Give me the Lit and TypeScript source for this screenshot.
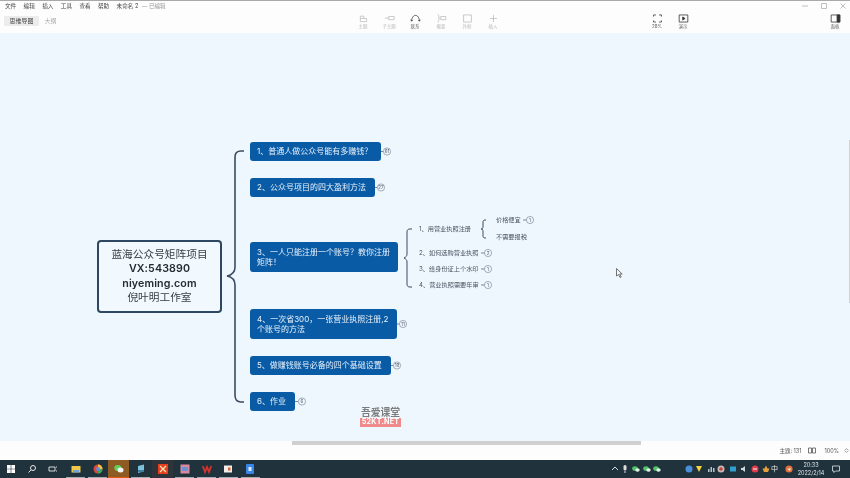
import { LitElement, html, css, svg } from "lit";
import { customElement } from "lit/decorators.js";

const menus = ["文件", "编辑", "插入", "工具", "查看", "帮助"];

const tools: [string, any, boolean][] = [
  ["主题", svg`<path d="M3 3.500h4.500v3H3zM3 6.500v4h8v-4H7.500"/>`, false],
  ["子主题", svg`<path d="M1 6h5M6 4h7v4H6z"/>`, false],
  ["联系", svg`<path d="M2 9.500C2.500 4.500 5 2.500 7 2.500s4.500 2 5 7M1 8l1 2 1.500-1.500M10.500 8.500 12 10l1-2"/>`, true],
  ["概要", svg`<path d="M2 1.500c1.500 0 1.500 1 1.500 2v1.500c0 1 .5 1 1 1-.5 0-1 0-1 1v2c0 1 0 2-1.500 2M6 4h6.500v4H6z"/>`, false],
  ["外框", svg`<path d="M2 2h10v9H2z"/>`, false],
  ["插入", svg`<path d="M7 2v9M2.500 6.500h9"/>`, false],
];

const nodes = [
  { t: "1、普通人做公众号能有多赚钱\uFF1F", x: 250, y: 142, w: 131, h: 19, n: "61", bx: 387 },
  { t: "2、公众号项目的四大盈利方法", x: 250, y: 178, w: 125, h: 19, n: "27", bx: 381 },
  { t: "3、一人只能注册一个账号\uFF1F教你注册矩阵\uFF01", x: 250, y: 242, w: 148, h: 30, n: "", bx: 0 },
  { t: "4、一次省300\uFF0C一张营业执照注册,2个账号的方法", x: 250, y: 309, w: 147, h: 30, n: "11", bx: 403 },
  { t: "5、做赚钱账号必备的四个基础设置", x: 250, y: 356, w: 141, h: 19, n: "19", bx: 397 },
  { t: "6、作业", x: 250, y: 392, w: 45, h: 19, n: "6", bx: 302 },
];

const subs = [
  { t: "1、用营业执照注册", x: 419, y: 229, n: "", bx: 0 },
  { t: "价格便宜", x: 496, y: 220, n: "1", bx: 530 },
  { t: "不需要报税", x: 496, y: 237, n: "", bx: 0 },
  { t: "2、如何选购营业执照", x: 419, y: 253, n: "2", bx: 488 },
  { t: "3、给身份证上个水印", x: 419, y: 269, n: "1", bx: 488 },
  { t: "4、营业执照需要年审", x: 419, y: 285, n: "1", bx: 488 },
];

const runningBars = [66, 88, 131, 153, 175, 197, 219, 241];

const badge = (cx: number, cy: number, n: string) => svg`
  <path d="M${cx - 7} ${cy}h3.500" class="thin"/>
  <circle cx=${cx} cy=${cy} r="3.600" class="bd"/>
  <text x=${cx} y=${cy + 1.700} class="bt">${n}</text>`;

const chat = svg`<ellipse cx="3" cy="3.500" rx="2.800" ry="2.300" fill="#4fc36a"/><ellipse cx="5.500" cy="5" rx="2.200" ry="1.800" fill="#e8f6ea"/>`;

@customElement("app-root")
export class AppRoot extends LitElement {
  static styles = css`
    :host { display: flex; flex-direction: column; width: 850px; height: 478px; overflow: hidden; font-family: "Inter", "Noto Sans CJK SC", sans-serif; background: #fff; }
    .blur { filter: blur(0.5px); display: flex; flex-direction: column; flex: 1; min-height: 0; }
    .topline { height: 1px; background: #a9a9a9; flex: none; }
    .title { height: 10px; flex: none; display: flex; align-items: center; padding-left: 5px; gap: 7.400px; font-size: 5.600px; color: #444; background: #fdfdfd; }
    .title .dim { color: #999; margin-left: -4px; }
    .win { margin-left: auto; display: flex; gap: 13px; padding-right: 4px; align-items: center; }
    .win svg { width: 6px; height: 6px; fill: none; stroke: #b0b0b0; stroke-width: .8; display: block; }
    .toolbar { height: 22px; flex: none; background: #fdfdfd; position: relative; }
    .tabs { display: flex; align-items: center; font-size: 6px; position: absolute; left: 4px; top: 5px; }
    .tab { padding: 0 5.500px; height: 10px; line-height: 10px; background: #ececec; border-radius: 1px; color: #444; }
    .tab.off { background: none; color: #aaa; }
    .tool { position: absolute; top: 2px; width: 26px; display: flex; flex-direction: column; align-items: center; font-size: 4.500px; line-height: 6px; color: #bbb; }
    .tool svg { width: 11px; height: 11px; fill: none; stroke: #bdbdbd; stroke-width: 1; display: block; }
    .tool.on { color: #666; }
    .tool.on svg { stroke: #333; }
    .tool.dark { color: #666; }
    .tool.dark svg { stroke: #333; }
    .canvas { height: 408px; flex: none; background: #eef7fe; position: relative; overflow: hidden; }
    .wires { position: absolute; left: 0; top: -33px; width: 850px; height: 478px; fill: none; }
    .wires .main { stroke: #3a4c60; stroke-width: 1.600; fill: none; }
    .wires .sub { stroke: #3a4c60; stroke-width: 1; fill: none; }
    .wires .thin { stroke: #44586c; stroke-width: .7; fill: none; }
    .wires .bd { stroke: #6b7c8c; stroke-width: .6; fill: #eef7fe; }
    .wires .bt { font-size: 4.500px; fill: #556; text-anchor: middle; stroke: none; }
    .root { position: absolute; left: 97px; top: 207px; width: 125px; height: 73px; box-sizing: border-box; border: 2px solid #2e4763; border-radius: 4px; background: #f1f8fe; display: flex; flex-direction: column; align-items: center; justify-content: center; font-size: 10.700px; line-height: 14.300px; color: #3a4046; }
    .root b { font-weight: 600; color: #262b30; letter-spacing: .1px; }
    .node { position: absolute; box-sizing: border-box; background: #0a5ba6; border-radius: 3px; color: #e6f1fa; font-size: 8px; line-height: 10.500px; padding: 0 7px; display: flex; align-items: center; }
    .node span { display: block; }
    .subt { position: absolute; font-size: 6.200px; line-height: 8px; color: #4a5560; white-space: nowrap; transform: translateY(-4px); }
    .mark { position: absolute; left: 359px; top: 374px; width: 43px; display: flex; flex-direction: column; align-items: center; font-weight: 700; }
    .mark .a { font-size: 9.800px; line-height: 11px; font-weight: 700; color: #7d7d7d; }
    .mark .b { font-size: 7.200px; line-height: 8.500px; color: #fff; background: #f08a8a; padding: 0 1.500px; letter-spacing: .2px; }
    .vbar { position: absolute; right: 0; top: 107px; width: 1.500px; height: 163px; background: #d2d2d2; }
    .cursor { position: absolute; left: 616px; top: 235px; width: 7px; height: 10px; }
    .cursor path { fill: #f4f4f4; stroke: #555; stroke-width: .8; }
    .status { height: 19px; flex: none; display: flex; align-items: center; justify-content: flex-end; font-size: 5.500px; color: #555; background: #fdfdfd; padding-right: 1px; position: relative; }
    .status svg { width: 8px; height: 7px; fill: none; stroke: #555; stroke-width: .8; display: block; }
    .status .i1 { margin: 0 8px 0 7px; }
    .status .i2 { width: 5px; margin-left: 5px; }
    .hbar { position: absolute; left: 292px; top: 0; width: 349px; height: 4px; background: #d0d0d0; }
    .task { height: 18px; flex: none; background: #20323c; display: flex; align-items: center; position: relative; color: #dfe4e8; font-size: 5.500px; filter: blur(0.35px); }
    .ti { position: absolute; top: 0; height: 18px; width: 21px; display: flex; align-items: center; justify-content: center; }
    .ti svg { width: 10px; height: 10px; display: block; }
    .ti.active { background: #8f5b24; border-bottom: 1px solid #e05a10; box-sizing: border-box; }
    .ti.dimbg { background: #30343a; }
    .run { position: absolute; bottom: 0; width: 19px; height: 1px; background: #a4adb4; }
    .tr { position: absolute; top: 5px; width: 8px; height: 8px; }
    .tr svg { width: 8px; height: 8px; display: block; }
    .zh { top: 4px; font-size: 7px; line-height: 9px; color: #e4e8ec; }
    .clock { position: absolute; left: 796px; top: 1px; width: 30px; text-align: center; font-size: 5.500px; line-height: 8px; }
  `;

  render() {
    const toolX = [363, 389, 415, 441, 467, 493];
    return html`
      <div class="blur">
        <div class="topline"></div>
        <div class="title">
          ${menus.map((m) => html`<span>${m}</span>`)}
          <span>未命名 2</span><span class="dim">— 已编辑</span>
          <div class="win">
            <svg viewBox="0 0 6 6"><path d="M0 3h6"/></svg>
            <svg viewBox="0 0 6 6"><path d="M.5.5h5v5h-5z"/></svg>
            <svg viewBox="0 0 6 6"><path d="M.5.5l5 5M5.500.5l-5 5"/></svg>
          </div>
        </div>
        <div class="toolbar">
          <div class="tabs"><span class="tab">思维导图</span><span class="tab off">大纲</span></div>
          ${tools.map(([l, p, on], i) => html`<div class="tool ${on ? "on" : ""}" style="left:${toolX[i] - 13}px"><svg viewBox="0 0 14 13">${p}</svg><span>${l}</span></div>`)}
          <div class="tool dark" style="left:644px"><svg viewBox="0 0 14 13"><path d="M2 4V2h3M9 2h3v2M12 9v2H9M5 11H2V9"/></svg><span>28%</span></div>
          <div class="tool dark" style="left:670px"><svg viewBox="0 0 14 13"><path d="M1.500 2h11v9h-11z"/><path d="M6 4.500l3 2-3 2z" fill="#333"/></svg><span>演示</span></div>
          <div class="tool dark" style="left:822px"><svg viewBox="0 0 14 13"><path d="M1.500 2h11v9h-11z"/><path d="M9 2h3.500v9H9z" fill="#333"/></svg><span>面板</span></div>
        </div>
        <div class="canvas">
          <svg class="wires" viewBox="0 0 850 478">
            <path class="main" d="M244 151h-3c-4 0-6 2-6 6v110c0 5-3 8-8 9 5 1 8 4 8 9v110c0 4 2 7 6 7h3"/>
            <path class="sub" d="M412 229h-2c-2 0-3 1-3 3v22c0 2-1 3-3 4 2 1 3 2 3 4v22c0 2 1 3 3 3h2"/>
            <path class="sub" d="M486 220h-1c-1.500 0-2 1-2 2v5c0 1-.5 2-2 2 1.500 0 2 1 2 2v5c0 1 .5 2 2 2h1"/>
            ${nodes.filter((n) => n.n).map((n) => badge(n.bx, n.y + n.h / 2, n.n))}
            ${subs.filter((n) => n.n).map((n) => badge(n.bx, n.y, n.n))}
          </svg>
          <div class="root"><span>蓝海公众号矩阵项目</span><b>VX:543890</b><b>niyeming.com</b><span>倪叶明工作室</span></div>
          ${nodes.map((n) => html`<div class="node" style="left:${n.x}px;top:${n.y - 33}px;width:${n.w}px;height:${n.h}px"><span>${n.t}</span></div>`)}
          ${subs.map((n) => html`<div class="subt" style="left:${n.x}px;top:${n.y - 33}px">${n.t}</div>`)}
          <div class="mark"><span class="a">吾爱课堂</span><span class="b">52KT.NET</span></div>
          <div class="vbar"></div>
          <svg class="cursor" viewBox="0 0 7 10"><path d="M.5.5v7.500l2-1.500 1.500 3 1.200-.6-1.500-2.900h2.500z"/></svg>
        </div>
        <div class="status">
          <div class="hbar"></div>
          <span>主题: 131</span>
          <svg class="i1" viewBox="0 0 8 7"><path d="M.5 1h3v5h-3zM4.500 1h3v5h-3z"/></svg>
          <span>100%</span>
          <svg class="i2" viewBox="0 0 8 7"><path d="M1 3l3-2.500L7 3M1 4l3 2.500L7 4"/></svg>
        </div>
      </div>
      <div class="task">
        ${runningBars.map((x) => html`<div class="run" style="left:${x}px"></div>`)}
        <div class="ti" style="left:0"><svg viewBox="0 0 10 10"><path fill="#fff" d="M1 1h3.700v3.700H1zM5.300 1H9v3.700H5.300zM1 5.300h3.700V9H1zM5.300 5.300H9V9H5.300z"/></svg></div>
        <div class="ti" style="left:21px"><svg viewBox="0 0 10 10"><circle cx="6" cy="4" r="2.500" fill="none" stroke="#e8e8e8"/><path d="M4 6 1.500 8.500" stroke="#e8e8e8"/></svg></div>
        <div class="ti" style="left:42px"><svg viewBox="0 0 10 10"><path d="M1 3h6v4H1zM8 3h1M8 7h1" fill="none" stroke="#e8e8e8" stroke-width=".9"/></svg></div>
        <div class="ti" style="left:65px"><svg viewBox="0 0 10 10"><path fill="#f0c94a" d="M.5 2h9v6.500h-9z"/><path fill="#6fa4d8" d="M2 6h6v2.500H2z"/></svg></div>
        <div class="ti" style="left:87px"><svg viewBox="0 0 10 10"><circle cx="5" cy="5" r="4.500" fill="#e0483c"/><path d="M5 5V.5A4.500 4.500 0 0 1 9.500 5z" fill="#f5c33b"/><path d="M5 5h4.500A4.500 4.500 0 0 1 5 9.500z" fill="#3fa85a"/><circle cx="5" cy="5" r="1.900" fill="#5b8fe8"/></svg></div>
        <div class="ti active" style="left:108px"><svg viewBox="0 0 10 10"><ellipse cx="3.800" cy="4" rx="3.500" ry="3" fill="#5fd35a"/><ellipse cx="6.500" cy="6" rx="3" ry="2.500" fill="#f4f4f4"/></svg></div>
        <div class="ti" style="left:130px"><svg viewBox="0 0 10 10"><path fill="#7fc1d8" d="M2 2l6-1.500v7L2 9z"/><path fill="#3d7f9c" d="M2 6h6v2H2z"/></svg></div>
        <div class="ti dimbg" style="left:152px"><svg viewBox="0 0 10 10"><path fill="#e8401c" d="M0 0h10v10H0z"/><path stroke="#f6e6c0" stroke-width="1.200" d="M2 2l6 6M8 2 2 8"/></svg></div>
        <div class="ti" style="left:174px"><svg viewBox="0 0 10 10"><path fill="#d98aa0" d="M.5.5h9v9h-9z"/><path fill="#6f90d0" d="M2 3h6v4H2z"/></svg></div>
        <div class="ti" style="left:196px"><svg viewBox="0 0 10 10"><path fill="none" stroke="#d8322c" stroke-width="1.800" d="M.8 2l2.200 6 2-5 2 5 2.200-6"/></svg></div>
        <div class="ti" style="left:217px"><svg viewBox="0 0 10 10"><path fill="#f3efe8" d="M1 1.500h8v7H1z"/><path fill="#d9603c" d="M5 3.500h2.500v3H5z"/></svg></div>
        <div class="ti" style="left:239px"><svg viewBox="0 0 10 10"><rect x="1" y="0" width="8" height="10" rx="1" fill="#3a86e8"/><rect x="3.500" y="3" width="3" height="4" fill="#dcecff"/></svg></div>

        ${([
          [611, svg`<path d="M1 5l3-3 3 3" fill="none" stroke="#ddd"/>`],
          [621, svg`<rect x="2.500" y="0" width="3" height="5.500" rx="1.500" fill="#ddd"/><path d="M4 6v2" stroke="#ddd"/>`],
          [632, chat],
          [643, chat],
          [653, chat],
          [685, svg`<circle cx="4" cy="4" r="3.500" fill="#4a90d9"/>`],
          [695, svg`<path d="M1 1h6L4 7z" fill="#f2d53c"/>`],
          [707, svg`<path d="M1 7V4h1.500v3zM3.500 7V2H5v5zM6 7V3h1.500v4z" fill="#b8c4cc"/>`],
          [717, svg`<circle cx="4" cy="4" r="3.500" fill="#c8b8b8"/><circle cx="4" cy="4" r="1.800" fill="#c6433a"/>`],
          [729, svg`<path d="M1 1.500h6v5H1z" fill="#2f9fd0"/>`],
          [740, svg`<path d="M1 3h1.500L5 1v6L2.500 5H1z" fill="#cfd6dc"/>`],
          [751, svg`<circle cx="4" cy="4" r="3.500" fill="#e03c4c"/><path d="M2 4h4" stroke="#fff"/>`],
          [762, svg`<path d="M4 .5l1.500 3h2L6 7H2L.5 3.500h2z" fill="#e8a03c"/>`],
          [785, svg`<circle cx="4" cy="4" r="3.600" fill="#e4703a"/><path d="M2 4l4-1-1 3z" fill="#f6dcc8"/>`],
        ] as [number, any][]).map(([x, p]) => html`<div class="tr" style="left:${x}px"><svg viewBox="0 0 8 8">${p}</svg></div>`)}
        <div class="tr zh" style="left:771px">中</div>
        <div class="clock">20:33<br />2022/2/14</div>
        <div class="tr" style="left:832px"><svg viewBox="0 0 8 8"><path d="M.5 1h7v5H3.500L2 7.500V6H.5z" fill="none" stroke="#dfe4e8" stroke-width=".8"/></svg></div>
      </div>
    `;
  }
}
